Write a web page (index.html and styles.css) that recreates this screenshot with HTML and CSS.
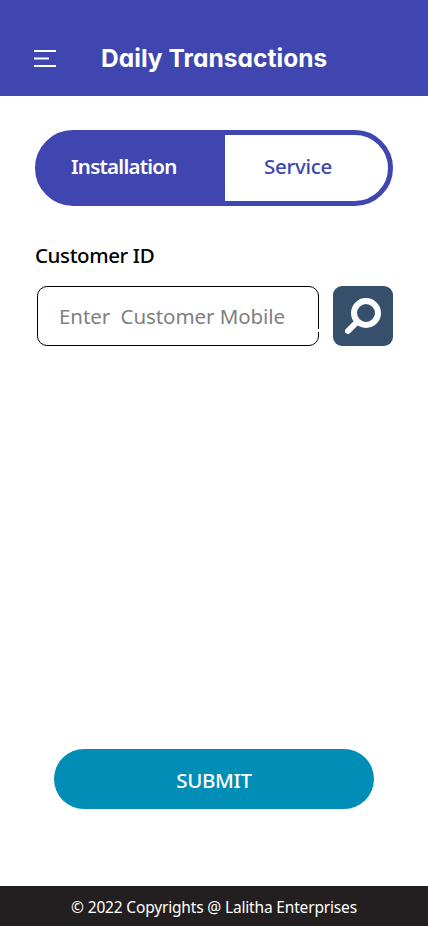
FILE: index.html
```html
<!DOCTYPE html>
<html lang="en">
<head>
<meta charset="utf-8">
<meta name="viewport" content="width=device-width, initial-scale=1">
<title>Daily Transactions</title>
<link rel="stylesheet" href="styles.css">
</head>
<body>
<header class="header">
  <button class="menu" aria-label="Menu"><svg width="22" height="18" viewBox="0 0 22 18"><path d="M0 1H22M0 8.5H15M0 16H22" stroke="#fff" stroke-width="2"/></svg></button>
  <h1 class="title"><span>Daily Transactions</span></h1>
</header>
<main class="main">
  <div class="tabs">
    <button class="tab tab-active"><span>Installation</span></button>
    <button class="tab tab-service"><span>Service</span></button>
  </div>
  <div class="label"><span>Customer ID</span></div>
  <div class="search">
    <div class="field"><span>Enter&nbsp; Customer Mobile</span><i class="notch"></i></div>
    <button class="find" aria-label="Search"><svg width="60" height="60" viewBox="0 0 60 60" fill="none" stroke="#fff"><circle cx="33" cy="27" r="12" stroke-width="6"/><path d="M24 36L15 45" stroke-width="6" stroke-linecap="round"/></svg></button>
  </div>
  <button class="submit"><span>SUBMIT</span></button>
</main>
<footer class="footer"><span>© 2022 Copyrights @ Lalitha Enterprises</span></footer>
</body>
</html>
```
FILE: styles.css
```css
* { box-sizing: border-box; }
body { margin: 0; height: 926px; display: flex; flex-direction: column; background: #fff; font-family: "Noto Sans", "Open Sans", sans-serif; font-size: 20.5px; overflow: hidden; }
button { font: inherit; border: 0; padding: 0; margin: 0; background: none; }
svg { display: block; }
span { white-space: nowrap; }
.header { height: 96px; background: #4046af; display: flex; align-items: flex-start; padding: 50px 34px 0; }
.menu { width: 22px; }
.title { margin: -8px 0 0 45px; font: 700 24.5px/32px Inter, sans-serif; font-feature-settings: "cv11"; letter-spacing: 0.05px; color: #fff; }
.main { flex: 1; display: flex; flex-direction: column; padding: 34px 35px 0; }
.tabs { height: 76px; width: 358px; display: flex; border: 5px solid #4046af; border-radius: 38px; background: linear-gradient(90deg, #4046af 185px, #fff 185px); }
.tab { height: 66px; padding-bottom: 5px; text-align: left; font-weight: 500; color: #4046af; }
.tab-active { width: 185px; padding-left: 31px; color: #fff; font-weight: 600; letter-spacing: -0.75px; }
.tab-service { padding-left: 39px; letter-spacing: -0.25px; }
.label { margin-top: 34px; height: 30px; line-height: 30px; font-weight: 500; letter-spacing: -0.4px; color: #000; }
.search { margin: 16px 0 0 2px; display: flex; gap: 14px; }
.field { position: relative; width: 282px; height: 60px; border: 1px solid #000; border-radius: 10px; padding-left: 21px; line-height: 58px; letter-spacing: -0.08px; color: #808080; }
.notch { position: absolute; right: -1px; top: 42px; width: 2px; height: 3px; background: #fff; }
.find { width: 60px; height: 60px; border-radius: 9px; background: #36506c; }
.submit { margin: 403px 0 0 19px; width: 320px; height: 60px; border-radius: 30px; background: #008eb6; color: #fff; font-weight: 500; letter-spacing: -0.3px; padding-top: 2px; }
.footer { height: 40px; background: #231f20; color: #fff; font-size: 15.5px; line-height: 42px; letter-spacing: -0.17px; text-align: center; }
```
